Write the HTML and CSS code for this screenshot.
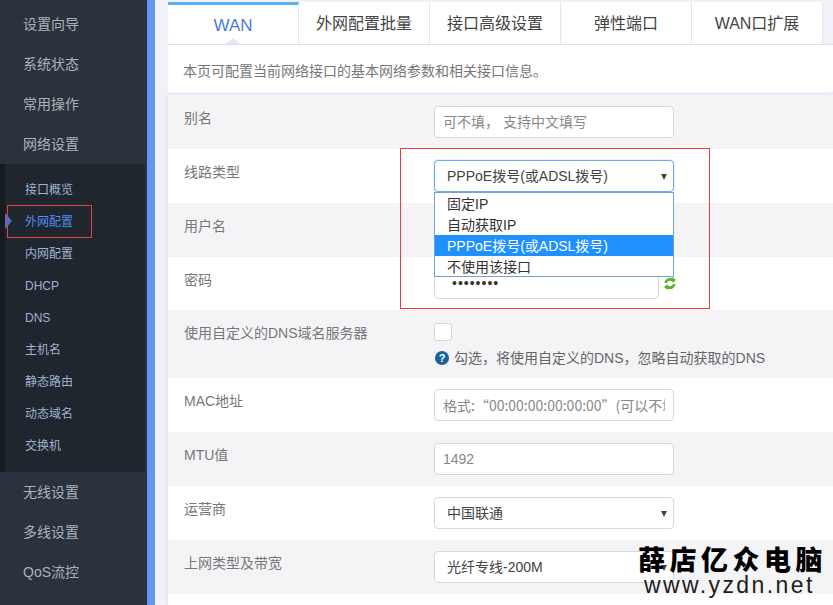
FILE: index.html
```html
<!DOCTYPE html>
<html lang="zh-CN">
<head>
<meta charset="utf-8">
<title>WAN</title>
<link rel="stylesheet" href="styles.css">
</head>
<body>
<div class="app">
  <nav class="sidebar">
    <div class="nav-item">设置向导</div>
    <div class="nav-item">系统状态</div>
    <div class="nav-item">常用操作</div>
    <div class="nav-item">网络设置</div>
    <div class="submenu">
      <div class="sub-item">接口概览</div>
      <div class="sub-item active">外网配置</div>
      <div class="sub-item">内网配置</div>
      <div class="sub-item">DHCP</div>
      <div class="sub-item">DNS</div>
      <div class="sub-item">主机名</div>
      <div class="sub-item">静态路由</div>
      <div class="sub-item">动态域名</div>
      <div class="sub-item">交换机</div>
    </div>
    <div class="nav-item">无线设置</div>
    <div class="nav-item">多线设置</div>
    <div class="nav-item">QoS流控</div>
  </nav>
  <div class="strip"></div>
  <main class="content">
    <div class="tabs">
      <div class="tab current">WAN</div>
      <div class="tab">外网配置批量</div>
      <div class="tab">接口高级设置</div>
      <div class="tab">弹性端口</div>
      <div class="tab">WAN口扩展</div>
    </div>
    <p class="intro">本页可配置当前网络接口的基本网络参数和相关接口信息。</p>
    <div class="form">
      <div class="row">
        <div class="label">别名</div>
        <input class="field" type="text" placeholder="可不填， 支持中文填写">
      </div>
      <div class="row">
        <div class="label">线路类型</div>
        <div class="select open">PPPoE拨号(或ADSL拨号)
          <div class="options">
            <div class="option">固定IP</div>
            <div class="option">自动获取IP</div>
            <div class="option selected">PPPoE拨号(或ADSL拨号)</div>
            <div class="option">不使用该接口</div>
          </div>
        </div>
      </div>
      <div class="row">
        <div class="label">用户名</div>
        <input class="field" type="text">
      </div>
      <div class="row row-password">
        <div class="label">密码</div>
        <input class="field password" type="password" value="12345678">
        <svg class="refresh" width="12" height="13" viewBox="0 0 12 13" aria-hidden="true">
          <path d="M.5 6C1 2 5 -.3 8.5 1.2V0L12 3l-3.5 3V4.4C6.5 3.3 4 3.6 2.8 6Z" fill="#5cb531"/>
          <path d="M11.5 7C11 11 7 13.3 3.5 11.8V13L0 10l3.500-3v1.600C5.500 9.700 8 9.400 9.200 7Z" fill="#5cb531"/>
        </svg>
      </div>
      <div class="row row-dns">
        <div class="label">使用自定义的DNS域名服务器</div>
        <div class="stack">
          <span class="checkbox"></span>
          <div class="hint"><span class="help">?</span>勾选，将使用自定义的DNS，忽略自动获取的DNS</div>
        </div>
      </div>
      <div class="row">
        <div class="label">MAC地址</div>
        <input class="field field-mac" type="text" placeholder="格式:“00:00:00:00:00:00”(可以不填)">
      </div>
      <div class="row">
        <div class="label">MTU值</div>
        <input class="field" type="text" placeholder="1492">
      </div>
      <div class="row">
        <div class="label">运营商</div>
        <div class="select">中国联通</div>
      </div>
      <div class="row">
        <div class="label">上网类型及带宽</div>
        <div class="select">光纤专线-200M</div>
      </div>
      <div class="row row-last"></div>
    </div>
  </main>
</div>
<div class="redbox"></div>
<div class="watermark">
  <div class="wm-cn">薛店亿众电脑</div>
  <div class="wm-url">www.yzdn.net</div>
</div>
</body>
</html>
```
FILE: styles.css
```css
* { box-sizing: border-box; }
html, body { margin: 0; padding: 0; height: 100%; overflow: hidden; }
body {
  position: relative;
  font-family: "Liberation Sans", "Noto Sans CJK SC", sans-serif;
  font-size: 14px;
  color: #666;
  background: #f0f2f8;
}
.app { display: flex; height: 605px; overflow: hidden; }

.sidebar { width: 147px; flex: none; background: #2b323d; padding-top: 4px; }
.nav-item {
  height: 40px;
  line-height: 40px;
  padding-left: 23px;
  color: #a9b2b8;
  font-size: 14px;
}
.submenu {
  margin-right: 2px;
  padding: 10px 0;
  background: #20262e;
  border-left: 5px solid #171b20;
}
.sub-item {
  position: relative;
  height: 32px;
  line-height: 32px;
  padding-left: 20px;
  font-size: 12px;
  color: #9db2cf;
}
.sub-item.active { color: #4d8df0; }
.sub-item.active::before {
  content: "";
  position: absolute;
  left: 0;
  top: 7px;
  border-left: 7px solid #3d78d8;
  border-top: 8px solid transparent;
  border-bottom: 8px solid transparent;
}
.sub-item.active::after {
  content: "";
  position: absolute;
  left: 2px;
  top: -1px;
  width: 83px;
  height: 31px;
  border: 1px solid #e04040;
}

.strip { width: 8px; flex: none; background: #6496f0; }

.content { flex: 1; min-width: 0; padding: 2px 0 0 13px; }
.tabs { display: flex; height: 43px; border-bottom: 1px solid #d6e2f7; }
.tab {
  position: relative;
  width: 131px;
  background: #fff;
  border-right: 1px solid #e3e8f0;
  text-align: center;
  line-height: 44px;
  font-size: 16px;
  color: #444;
}
.tab.current {
  border-top: 3px solid #5fb0ef;
  line-height: 42px;
  color: #4f79e0;
  font-size: 17px;
}
.tab.current::after {
  content: "";
  position: absolute;
  left: 57px;
  bottom: 0;
  border-left: 8px solid transparent;
  border-right: 8px solid transparent;
  border-bottom: 6px solid #e4e9f4;
}
.intro {
  margin: 0;
  height: 50px;
  padding-top: 15px;
  line-height: 22px;
  padding-left: 15px;
  background: #fff;
  border-bottom: 3px solid #e8eefb;
  font-size: 14px;
  color: #777;
}
.form { box-shadow: -2px 0 2px #dfe7f8; }
.row {
  display: flex;
  align-items: flex-start;
  height: 54px;
  padding: 11px 0 0 16px;
  background: #fff;
}
.row:nth-child(odd) { background: #f4f4f7; }
.row-password { height: 53px; }
.row-dns { height: 68px; padding-top: 13px; }
.row-last { height: 11px; padding: 0; }
.label { width: 250px; flex: none; line-height: 20px; padding-top: 2px; color: #777; }
.row-dns .label { padding-top: 0; }

.field {
  width: 240px;
  height: 32px;
  padding: 0 8px;
  border: 1px solid #d8d8d8;
  border-radius: 4px;
  background: #fff;
  font: inherit;
  color: #444;
  outline: none;
}
.field::placeholder { color: #888; opacity: 1; }
.field-mac { font-family: "Noto Sans CJK SC", "Liberation Sans", sans-serif; }
.password { width: 225px; margin-top: -1px; padding-left: 17px; color: #333; letter-spacing: 1px; }
.refresh { margin: 9px 0 0 5px; flex: none; }

.select {
  position: relative;
  width: 240px;
  height: 32px;
  padding-left: 12px;
  line-height: 31px;
  border: 1px solid #d8d8d8;
  border-radius: 4px;
  background: #fff;
  color: #444;
}
.select::after {
  content: "";
  position: absolute;
  right: 6px;
  top: 13px;
  border-left: 3px solid transparent;
  border-right: 3px solid transparent;
  border-top: 6px solid #444;
}
.select.open { border-color: #6fa8e8; box-shadow: 0 0 2px #a9cdf5; z-index: 2; }
.options {
  position: absolute;
  left: -1px;
  top: 31px;
  width: 240px;
  height: 85px;
  border: 1px solid #7a9fd8;
  background: #fff;
  color: #333;
  line-height: 23px;
}
.option { height: 21px; padding-left: 12px; }
.option.selected { background: #1e90ff; color: #fff; line-height: 22px; }

.stack { display: flex; flex-direction: column; }
.checkbox {
  width: 18px;
  height: 18px;
  border: 1px solid #d8d8d8;
  border-radius: 3px;
  background: #fff;
}
.hint { display: flex; align-items: center; margin-top: 7px; line-height: 20px; color: #666; }
.help {
  width: 14px;
  height: 14px;
  margin: 0 5px 0 1px;
  border-radius: 50%;
  background: #1a5f9e;
  color: #fff;
  font-size: 11px;
  font-weight: 700;
  line-height: 14px;
  text-align: center;
}

.redbox {
  position: absolute;
  left: 400px;
  top: 148px;
  width: 310px;
  height: 161px;
  border: 1px solid #f03a3a;
  z-index: 3;
}
.watermark {
  position: absolute;
  left: 638px;
  top: 545px;
  width: 190px;
  z-index: 4;
  color: #000;
}
.wm-cn {
  font-family: "Noto Sans CJK SC", sans-serif;
  font-size: 27px;
  font-weight: 900;
  letter-spacing: 4.5px;
  line-height: 28px;
  white-space: nowrap;
}
.wm-url {
  margin-left: 6px;
  font-family: "Liberation Sans", sans-serif;
  font-size: 23px;
  letter-spacing: 2.4px;
  line-height: 24px;
  color: #1c1c1c;
  white-space: nowrap;
}
```
